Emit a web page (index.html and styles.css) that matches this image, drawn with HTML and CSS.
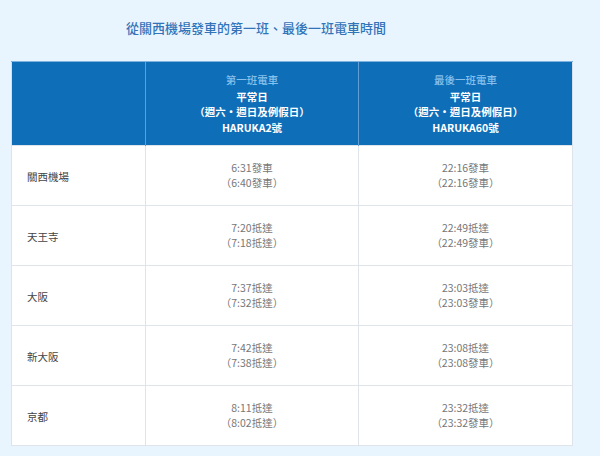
FILE: index.html
```html
<!DOCTYPE html>
<html lang="zh-Hant">
<head>
<meta charset="utf-8">
<title>時刻表</title>
<link rel="stylesheet" href="styles.css">
</head>
<body>
<div class="page">
  <h1 class="title">從關西機場發車的第一班、最後一班電車時間</h1>
  <table class="timetable">
    <colgroup>
      <col class="c-station">
      <col class="c-first">
      <col class="c-last">
    </colgroup>
    <thead>
      <tr>
        <th></th>
        <th>
          <div class="sub">第一班電車</div>
          <div>平常日</div>
          <div>（週六・週日及例假日）</div>
          <div>HARUKA2號</div>
        </th>
        <th>
          <div class="sub">最後一班電車</div>
          <div>平常日</div>
          <div>（週六・週日及例假日）</div>
          <div>HARUKA60號</div>
        </th>
      </tr>
    </thead>
    <tbody>
      <tr>
        <td class="station">關西機場</td>
        <td><div>6:31發車</div><div>（6:40發車）</div></td>
        <td><div>22:16發車</div><div>（22:16發車）</div></td>
      </tr>
      <tr>
        <td class="station">天王寺</td>
        <td><div>7:20抵達</div><div>（7:18抵達）</div></td>
        <td><div>22:49抵達</div><div>（22:49發車）</div></td>
      </tr>
      <tr>
        <td class="station">大阪</td>
        <td><div>7:37抵達</div><div>（7:32抵達）</div></td>
        <td><div>23:03抵達</div><div>（23:03發車）</div></td>
      </tr>
      <tr>
        <td class="station">新大阪</td>
        <td><div>7:42抵達</div><div>（7:38抵達）</div></td>
        <td><div>23:08抵達</div><div>（23:08發車）</div></td>
      </tr>
      <tr>
        <td class="station">京都</td>
        <td><div>8:11抵達</div><div>（8:02抵達）</div></td>
        <td><div>23:32抵達</div><div>（23:32發車）</div></td>
      </tr>
    </tbody>
  </table>
</div>
</body>
</html>
```
FILE: styles.css
```css
html, body {
  margin: 0;
  padding: 0;
  background: #e9f5fe;
}
body {
  font-family: "Noto Sans CJK TC", "Noto Sans", sans-serif;
  width: 600px;
  height: 456px;
  overflow: hidden;
}
.page {
  padding-top: 18px;
}
.title {
  margin: 0 0 23px 126px;
  font-size: 13px;
  line-height: 20px;
  font-weight: 500;
  color: #3373b8;
}
.timetable {
  margin-left: 11px;
  width: 561px;
  table-layout: fixed;
  border-collapse: collapse;
  background: #ffffff;
  border: 1px solid #d6dee6;
}
.c-station { width: 134px; }
.c-first { width: 213px; }
.c-last { width: 214px; }
.timetable th {
  height: 83px;
  padding: 0;
  background: #0e6eb8;
  color: #ffffff;
  font-size: 10.5px;
  line-height: 15.5px;
  font-weight: 700;
  text-align: center;
  vertical-align: middle;
  border-left: 1px solid #5f9fd6;
  border-top: 1px solid #7fb3df;
}
.timetable th:first-child {
  border-left: 1px solid #d6dee6;
}
.timetable th .sub {
  color: #86c0ec;
  font-weight: 500;
  margin-bottom: 1px;
}
.timetable td {
  height: 59px;
  padding: 0;
  border: 1px solid #dfe4ea;
  font-size: 10.5px;
  line-height: 14.5px;
  color: #777777;
  text-align: center;
  vertical-align: middle;
}
.timetable td.station {
  height: 56px;
  text-align: left;
  padding: 3px 0 0 15px;
  color: #444444;
}
```
